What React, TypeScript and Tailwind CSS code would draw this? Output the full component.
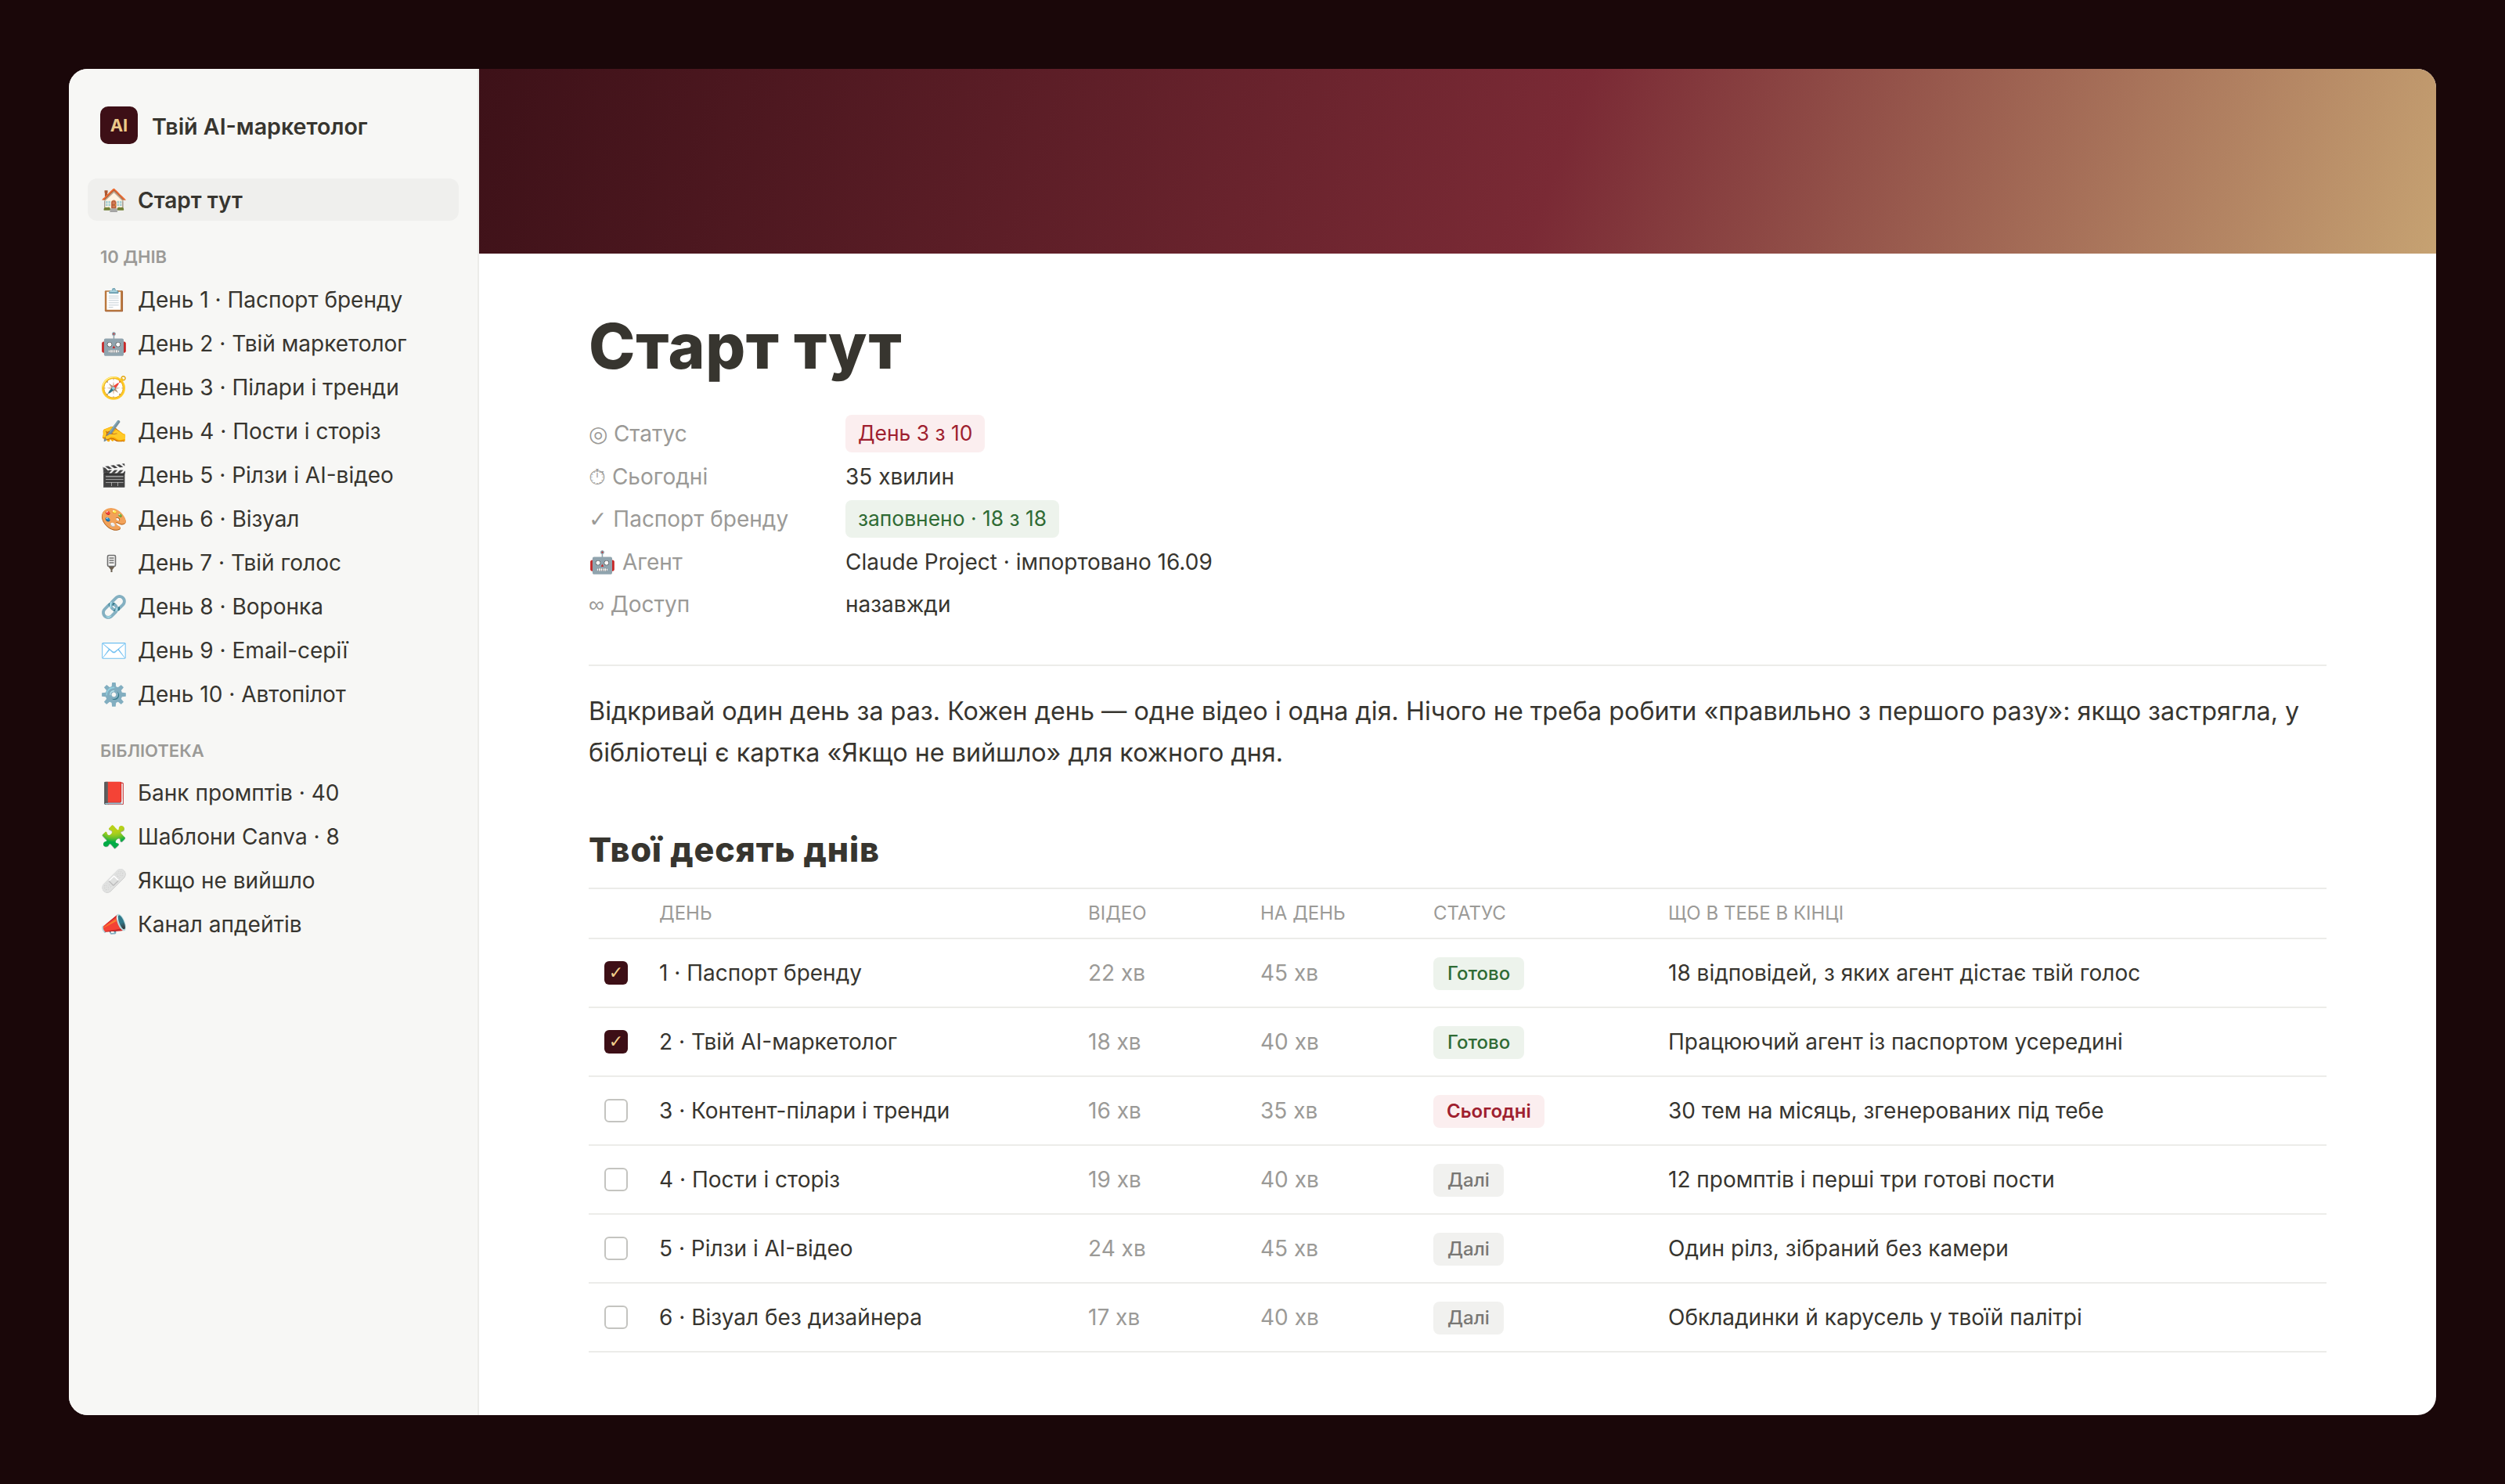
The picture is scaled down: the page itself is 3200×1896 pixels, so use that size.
const MicIcon = (
  <svg width="28" height="28" viewBox="0 0 28 28" className="block">
    <rect x="9.5" y="4.5" width="10" height="14" rx="1.5" fill="#f4f4f2" stroke="#6f6f6f" strokeWidth="1.6" />
    <path d="M11.5 8h6M11.5 11h6M11.5 14h6" stroke="#6f6f6f" strokeWidth="1.4" />
    <path d="M10.5 19h8l-3 4v3h-2v-3z" fill="#6a5f50" />
  </svg>
)

const days: { emoji: React.ReactNode; label: string }[] = [
  { emoji: '📋', label: 'День 1 · Паспорт бренду' },
  { emoji: '🤖', label: 'День 2 · Твій маркетолог' },
  { emoji: '🧭', label: 'День 3 · Пілари і тренди' },
  { emoji: '✍️', label: 'День 4 · Пости і сторіз' },
  { emoji: '🎬', label: 'День 5 · Рілзи і AI-відео' },
  { emoji: '🎨', label: 'День 6 · Візуал' },
  { emoji: MicIcon, label: 'День 7 · Твій голос' },
  { emoji: '🔗', label: 'День 8 · Воронка' },
  { emoji: '✉️', label: 'День 9 · Email-серії' },
  { emoji: '⚙️', label: 'День 10 · Автопілот' },
]

const library = [
  { emoji: '📕', label: 'Банк промптів · 40' },
  { emoji: '🧩', label: 'Шаблони Canva · 8' },
  { emoji: '🩹', label: 'Якщо не вийшло' },
  { emoji: '📣', label: 'Канал апдейтів' },
]

type Status = 'done' | 'today' | 'next'

const rows: { done: boolean; day: string; video: string; perDay: string; status: Status; result: string }[] = [
  { done: true, day: '1 · Паспорт бренду', video: '22 хв', perDay: '45 хв', status: 'done', result: '18 відповідей, з яких агент дістає твій голос' },
  { done: true, day: '2 · Твій AI-маркетолог', video: '18 хв', perDay: '40 хв', status: 'done', result: 'Працюючий агент із паспортом усередині' },
  { done: false, day: '3 · Контент-пілари і тренди', video: '16 хв', perDay: '35 хв', status: 'today', result: '30 тем на місяць, згенерованих під тебе' },
  { done: false, day: '4 · Пости і сторіз', video: '19 хв', perDay: '40 хв', status: 'next', result: '12 промптів і перші три готові пости' },
  { done: false, day: '5 · Рілзи і AI-відео', video: '24 хв', perDay: '45 хв', status: 'next', result: 'Один рілз, зібраний без камери' },
  { done: false, day: '6 · Візуал без дизайнера', video: '17 хв', perDay: '40 хв', status: 'next', result: 'Обкладинки й карусель у твоїй палітрі' },
]

function NavItem({ emoji, label }: { emoji: React.ReactNode; label: string }) {
  return (
    <div className="flex h-[56px] items-center px-4 text-[28px] text-[#37352f]">
      <span className="w-[48px] shrink-0 text-[28px]">{emoji}</span>
      <span>{label}</span>
    </div>
  )
}

function StatusBadge({ status }: { status: Status }) {
  if (status === 'done') {
    return <span className="inline-block rounded-lg bg-[#edf3ec] px-[18px] py-[5px] text-[24px] leading-[32px] font-medium text-[#2f6b34]">Готово</span>
  }
  if (status === 'today') {
    return <span className="inline-block rounded-lg bg-[#fbeeef] px-[17px] py-[5px] text-[24px] leading-[32px] font-semibold text-[#9f1f2f]">Сьогодні</span>
  }
  return <span className="inline-block rounded-lg bg-[#f1f1ef] px-[18px] py-[5px] text-[24px] leading-[32px] font-medium text-[#787774]">Далі</span>
}

function Prop({ icon, label, children }: { icon: React.ReactNode; label: string; children: React.ReactNode }) {
  return (
    <div className="flex h-[54.5px] items-center text-[28px]">
      <div className="w-[328px] shrink-0 text-[#9b9a97]">{icon} {label}</div>
      <div className="text-[#37352f]">{children}</div>
    </div>
  )
}

export default function App() {
  return (
    <div className="min-h-screen bg-[#1a0709] p-[88px] font-['Inter',sans-serif]">
      <div className="flex h-[1720px] overflow-hidden rounded-[24px] bg-white">
        <aside className="w-[524px] shrink-0 border-r-2 border-[#ecece9] bg-[#f7f7f5] px-6 pt-12">
          <div className="flex items-center gap-[18px] px-4">
            <div className="flex h-12 w-12 items-center justify-center rounded-[10px] bg-[#3d0f16] text-[22px] font-bold text-[#ecc98a]">AI</div>
            <div className="pt-[4px] text-[28.6px] font-semibold text-[#37352f]">Твій AI-маркетолог</div>
          </div>
          <div className="mt-[44px] flex h-[54px] items-center rounded-xl bg-[#efefed] px-4 text-[28px] font-semibold text-[#37352f]">
            <span className="w-[48px] shrink-0">🏠</span>
            <span className="pt-[2px]">Старт тут</span>
          </div>
          <div className="mt-[30px] mb-[10px] px-4 text-[22px] font-semibold text-[#9b9a97]">10 ДНІВ</div>
          {days.map(d => <NavItem key={d.label} emoji={d.emoji} label={d.label} />)}
          <div className="mt-[28px] mb-[9px] px-4 text-[22px] font-semibold text-[#9b9a97]">БІБЛІОТЕКА</div>
          {library.map(d => <NavItem key={d.label} emoji={d.emoji} label={d.label} />)}
        </aside>

        <main className="flex-1">
          <div className="h-[236px] bg-[linear-gradient(110deg,#3d1118_0%,#7a2a35_55%,#c6a272_100%)]" />
          <div className="px-[140px]">
            <h1 className="mt-[70px] text-[80px] leading-[96px] font-extrabold tracking-[0.008em] text-[#37352f]">Старт тут</h1>
            <div className="mt-[37px]">
              <Prop icon="◎" label="Статус">
                <span className="inline-block rounded-lg bg-[#fbeeef] px-4 py-1 text-[26.4px] text-[#9f1f2f]">День 3 з 10</span>
              </Prop>
              <Prop icon="⏱" label="Сьогодні">35 хвилин</Prop>
              <Prop icon={<span className="font-['DejaVu_Sans']">✓</span>} label="Паспорт бренду">
                <span className="inline-block rounded-lg bg-[#edf3ec] px-4 py-1 text-[26.4px] text-[#2f6b34]">заповнено · 18 з 18</span>
              </Prop>
              <Prop icon="🤖" label="Агент">Claude Project · імпортовано 16.09</Prop>
              <Prop icon={<span className="font-['Liberation_Sans']">∞</span>} label="Доступ">назавжди</Prop>
            </div>
            <div className="mt-[49px] h-[2px] bg-[#ecece9]" />
            <p className="mt-[31px] text-[32.3px] leading-[53px] text-[#37352f]">
              Відкривай один день за раз. Кожен день — одне відео і одна дія. Нічого не треба робити «правильно з першого разу»: якщо застрягла, у бібліотеці є картка «Якщо не вийшло» для кожного дня.
            </p>
            <h2 className="mt-[67px] text-[43px] leading-[60px] font-extrabold tracking-[0.02em] text-[#37352f]">Твої десять днів</h2>
            <div className="mt-[19px] border-t-2 border-[#ecece9]">
              <div className="grid h-[64px] grid-cols-[90px_548px_220px_221px_300px_1fr] items-center border-b-2 border-[#ecece9] text-[24px] text-[#9b9a97]">
                <div />
                <div>ДЕНЬ</div>
                <div>ВІДЕО</div>
                <div>НА ДЕНЬ</div>
                <div>СТАТУС</div>
                <div>ЩО В ТЕБЕ В КІНЦІ</div>
              </div>
              {rows.map(r => (
                <div key={r.day} className="grid h-[88px] grid-cols-[90px_548px_220px_221px_300px_1fr] items-center border-b-2 border-[#ecece9] text-[28px] text-[#37352f]">
                  <div className="pl-[20px]">
                    {r.done ? (
                      <div className="flex h-[30px] w-[30px] items-center justify-center rounded-md bg-[#3d0f16] font-['DejaVu_Sans'] text-[22px] text-[#f2d08e]">✓</div>
                    ) : (
                      <div className="h-[30px] w-[30px] rounded-md border-2 border-[#c4c4c0]" />
                    )}
                  </div>
                  <div>{r.day}</div>
                  <div className="text-[#9b9a97]">{r.video}</div>
                  <div className="text-[#9b9a97]">{r.perDay}</div>
                  <div><StatusBadge status={r.status} /></div>
                  <div>{r.result}</div>
                </div>
              ))}
            </div>
          </div>
        </main>
      </div>
    </div>
  )
}
